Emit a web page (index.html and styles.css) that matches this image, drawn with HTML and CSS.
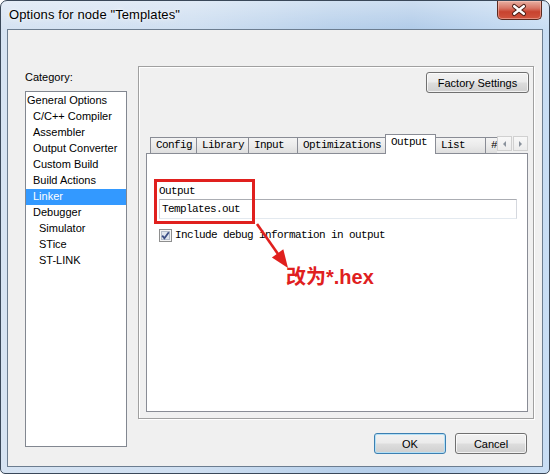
FILE: index.html
```html
<!DOCTYPE html>
<html>
<head>
<meta charset="utf-8">
<title>Options for node "Templates"</title>
<link rel="stylesheet" href="styles.css">
</head>
<body>
<div class="window">
  <div class="titlebar">
    <span class="title">Options for node "Templates"</span>
    <div class="close-btn">
      <svg width="45" height="18" viewBox="0 0 45 18">
        <path d="M17 5 L27 13 M27 5 L17 13" stroke="#4b1e16" stroke-width="4.6" stroke-linecap="round" fill="none"/>
        <path d="M17 5 L27 13 M27 5 L17 13" stroke="#ffffff" stroke-width="2.6" stroke-linecap="round" fill="none"/>
      </svg>
    </div>
  </div>
  <div class="client">
    <div class="left-col">
      <div class="cat-label">Category:</div>
      <ul class="listbox">
        <li class="lvl0">General Options</li>
        <li class="lvl1">C/C++ Compiler</li>
        <li class="lvl1">Assembler</li>
        <li class="lvl1">Output Converter</li>
        <li class="lvl1">Custom Build</li>
        <li class="lvl1">Build Actions</li>
        <li class="lvl1 selected">Linker</li>
        <li class="lvl1">Debugger</li>
        <li class="lvl2">Simulator</li>
        <li class="lvl2">STice</li>
        <li class="lvl2">ST-LINK</li>
      </ul>
    </div>
    <div class="right-col">
      <div class="panel">
        <div class="panel-top">
          <button class="btn btn-factory">Factory Settings</button>
        </div>
        <div class="tabs">
          <div class="tabstrip">
            <div class="tablist">
              <div class="tab tab-config">Config</div>
              <div class="tab">Library</div>
              <div class="tab">Input</div>
              <div class="tab">Optimizations</div>
              <div class="tab active">Output</div>
              <div class="tab">List</div>
              <div class="tab">#</div>
            </div>
            <div class="scrollers">
              <span class="scroll"><span class="tri tri-left"></span></span>
              <span class="scroll"><span class="tri tri-right"></span></span>
            </div>
          </div>
          <div class="page">
            <div class="field-label">Output</div>
            <div class="textbox">Templates.out</div>
            <div class="check-row">
              <span class="checkbox">
                <svg width="13" height="13" viewBox="0 0 13 13">
                  <rect x="0.5" y="0.5" width="12" height="12" fill="#f4f4f4" stroke="#8e8f8f"/>
                  <rect x="2.5" y="2.5" width="8" height="8" fill="#dfe5ee" stroke="#b3bccb"/>
                  <path d="M3.2 6.6 L5.4 9.2 L9.8 3.2" stroke="#3c4f86" stroke-width="1.8" fill="none"/>
                </svg>
              </span>
              <span>Include debug information in output</span>
            </div>
            <div class="anno-rect"></div>
            <svg class="anno-arrow" width="50" height="60" viewBox="0 0 50 60">
              <path d="M10 10 L31 40" stroke="#e0201e" stroke-width="2.6" fill="none"/>
              <polygon points="41,54 36.3,35.3 24.9,43.5" fill="#e0201e"/>
            </svg>
            <div class="anno-text">改为*.hex</div>
          </div>
        </div>
      </div>
      <div class="dialog-buttons">
        <button class="btn btn-default">OK</button>
        <button class="btn">Cancel</button>
      </div>
    </div>
  </div>
</div>
</body>
</html>
```

FILE: styles.css
```css
* {
  box-sizing: border-box;
}

html, body {
  margin: 0;
  padding: 0;
}

body {
  width: 550px;
  height: 474px;
  overflow: hidden;
  background: #ffffff;
  font-family: "Liberation Sans", Arial, sans-serif;
  font-size: 11px;
  color: #000000;
}

.window {
  width: 550px;
  height: 474px;
  border: 1px solid #3a4859;
  border-radius: 7px 7px 5px 5px;
  overflow: hidden;
  display: flex;
  flex-direction: column;
  background:
    linear-gradient(180deg, rgba(255, 255, 255, 0.35) 0, rgba(255, 255, 255, 0) 28px),
    linear-gradient(90deg, #d6e3f2 0%, #cfdff1 35%, #b9d1eb 60%, #b2cce9 75%, #c9def4 100%);
}

.titlebar {
  flex: none;
  height: 28px;
  display: flex;
  justify-content: space-between;
  align-items: flex-start;
  padding-left: 8px;
  padding-right: 7px;
}

.title {
  font-size: 13px;
  line-height: 28px;
  letter-spacing: 0.1px;
  color: #000000;
  text-shadow: 0 0 6px rgba(255, 255, 255, 0.9), 0 0 2px rgba(255, 255, 255, 0.9);
}

.close-btn {
  width: 45px;
  height: 19px;
  border: 1px solid #5b2a20;
  border-top: none;
  border-radius: 0 0 5px 5px;
  background: linear-gradient(180deg, #e8b0a2 0%, #d77565 40%, #c8432f 60%, #d0553f 100%);
  box-shadow: inset 0 0 0 1px rgba(255, 210, 200, 0.45);
  display: flex;
  align-items: center;
  justify-content: center;
}

.close-btn svg {
  display: block;
}

.client {
  flex: none;
  height: 438px;
  margin: 0 6px;
  border: 1px solid #6c7d90;
  background: #f0f0f0;
  display: flex;
  gap: 11px;
  padding: 0 8px 0 17px;
}

.left-col {
  width: 102px;
  flex: none;
  padding-top: 40px;
}

.cat-label {
  height: 14px;
  line-height: 14px;
  margin-bottom: 7px;
}

.listbox {
  list-style: none;
  margin: 0;
  padding: 1px 0 0 0;
  height: 356px;
  border: 1px solid #828790;
  background: #ffffff;
}

.listbox li {
  height: 16px;
  line-height: 15px;
  white-space: nowrap;
}

.lvl0 {
  padding-left: 1px;
}

.lvl1 {
  padding-left: 7px;
}

.lvl2 {
  padding-left: 13px;
}

.listbox li.selected {
  background: #3399ff;
  color: #ffffff;
}

.right-col {
  width: 396px;
  flex: none;
  padding-top: 36px;
  display: flex;
  flex-direction: column;
}

.panel {
  height: 353px;
  border: 1px solid #a0a0a0;
  box-shadow: inset 1px 1px 0 #ffffff, 1px 1px 0 #ffffff;
  padding: 5px 4px 6px 7px;
  display: flex;
  flex-direction: column;
}

.panel-top {
  display: flex;
  justify-content: flex-end;
  height: 21px;
}

.btn {
  height: 21px;
  padding: 0;
  border: 1px solid #707070;
  border-radius: 3px;
  background: linear-gradient(180deg, #f2f2f2 0%, #ebebeb 48%, #dddddd 52%, #cfcfcf 100%);
  box-shadow: inset 0 0 0 1px rgba(255, 255, 255, 0.7);
  font-family: "Liberation Sans", Arial, sans-serif;
  font-size: 11px;
  color: #000000;
  line-height: 18px;
}

.btn-factory {
  width: 103px;
}

.tabs {
  margin-top: 41px;
  margin-right: 1px;
  height: 278px;
  display: flex;
  flex-direction: column;
}

.tabstrip {
  flex: none;
  height: 19px;
  display: flex;
  align-items: flex-start;
  position: relative;
  z-index: 1;
}

.tablist {
  flex: 1;
  min-width: 0;
  height: 20px;
  padding-left: 4px;
  padding-bottom: 1px;
  overflow: hidden;
  display: flex;
  align-items: flex-end;
}

.tab {
  flex: none;
  height: 16px;
  min-width: 49px;
  padding: 0 4px 0 5px;
  border: 1px solid #898c95;
  border-bottom: none;
  border-right: none;
  background: linear-gradient(180deg, #f4f4f4 0%, #ebebeb 50%, #dedede 100%);
  font-family: "Liberation Mono", "DejaVu Sans Mono", monospace;
  font-size: 11px;
  letter-spacing: -0.6px;
  line-height: 15px;
  white-space: nowrap;
}

.tab-config {
  min-width: 0;
}

.tab.active {
  height: 20px;
  min-width: 51px;
  margin-bottom: -1px;
  background: #ffffff;
  border-right: 1px solid #898c95;
}

.tab.active + .tab {
  border-left: none;
}

.scrollers {
  flex: none;
  width: 31px;
  margin-top: 2px;
  display: flex;
  gap: 1px;
}

.scroll {
  width: 15px;
  height: 15px;
  border: 1px solid #d0d0d0;
  background: linear-gradient(180deg, #f8f8f8, #ececec);
  display: flex;
  align-items: center;
  justify-content: center;
}

.tri {
  width: 0;
  height: 0;
  border-top: 3px solid transparent;
  border-bottom: 3px solid transparent;
}

.tri-left {
  border-right: 3px solid #8a929c;
}

.tri-right {
  border-left: 3px solid #8a929c;
}

.page {
  flex: 1;
  position: relative;
  border: 1px solid #898c95;
  background: #ffffff;
  padding: 31px 10px 0 12px;
  font-family: "Liberation Mono", "DejaVu Sans Mono", monospace;
  font-size: 11px;
  letter-spacing: -0.6px;
}

.field-label {
  height: 13px;
  line-height: 13px;
}

.textbox {
  margin-top: 1px;
  height: 20px;
  border: 1px solid #abadb3;
  border-left-color: #d5d8de;
  border-right-color: #d5d8de;
  border-bottom-color: #e3e9ef;
  padding-left: 2px;
  line-height: 18px;
}

.check-row {
  margin-top: 10px;
  height: 13px;
  display: flex;
  align-items: center;
  gap: 3px;
  line-height: 13px;
}

.checkbox {
  width: 13px;
  height: 13px;
  flex: none;
}

.checkbox svg {
  display: block;
}

.anno-rect {
  position: absolute;
  left: 7px;
  top: 25px;
  width: 101px;
  height: 45px;
  border: 3px solid #e0201e;
}

.anno-arrow {
  position: absolute;
  left: 100px;
  top: 60px;
}

.anno-text {
  position: absolute;
  left: 139px;
  top: 112px;
  font-family: "Liberation Sans", "Noto Sans CJK SC", sans-serif;
  font-size: 20px;
  font-weight: bold;
  letter-spacing: 0;
  line-height: 22px;
  color: #e0201e;
  white-space: nowrap;
}

.dialog-buttons {
  margin-top: 14px;
  display: flex;
  justify-content: flex-end;
  gap: 9px;
  padding-right: 7px;
}

.dialog-buttons .btn {
  width: 72px;
}

.btn-default {
  border-color: #3c7fb1;
  box-shadow: inset 0 0 0 1px #b4e0f6;
}
```
